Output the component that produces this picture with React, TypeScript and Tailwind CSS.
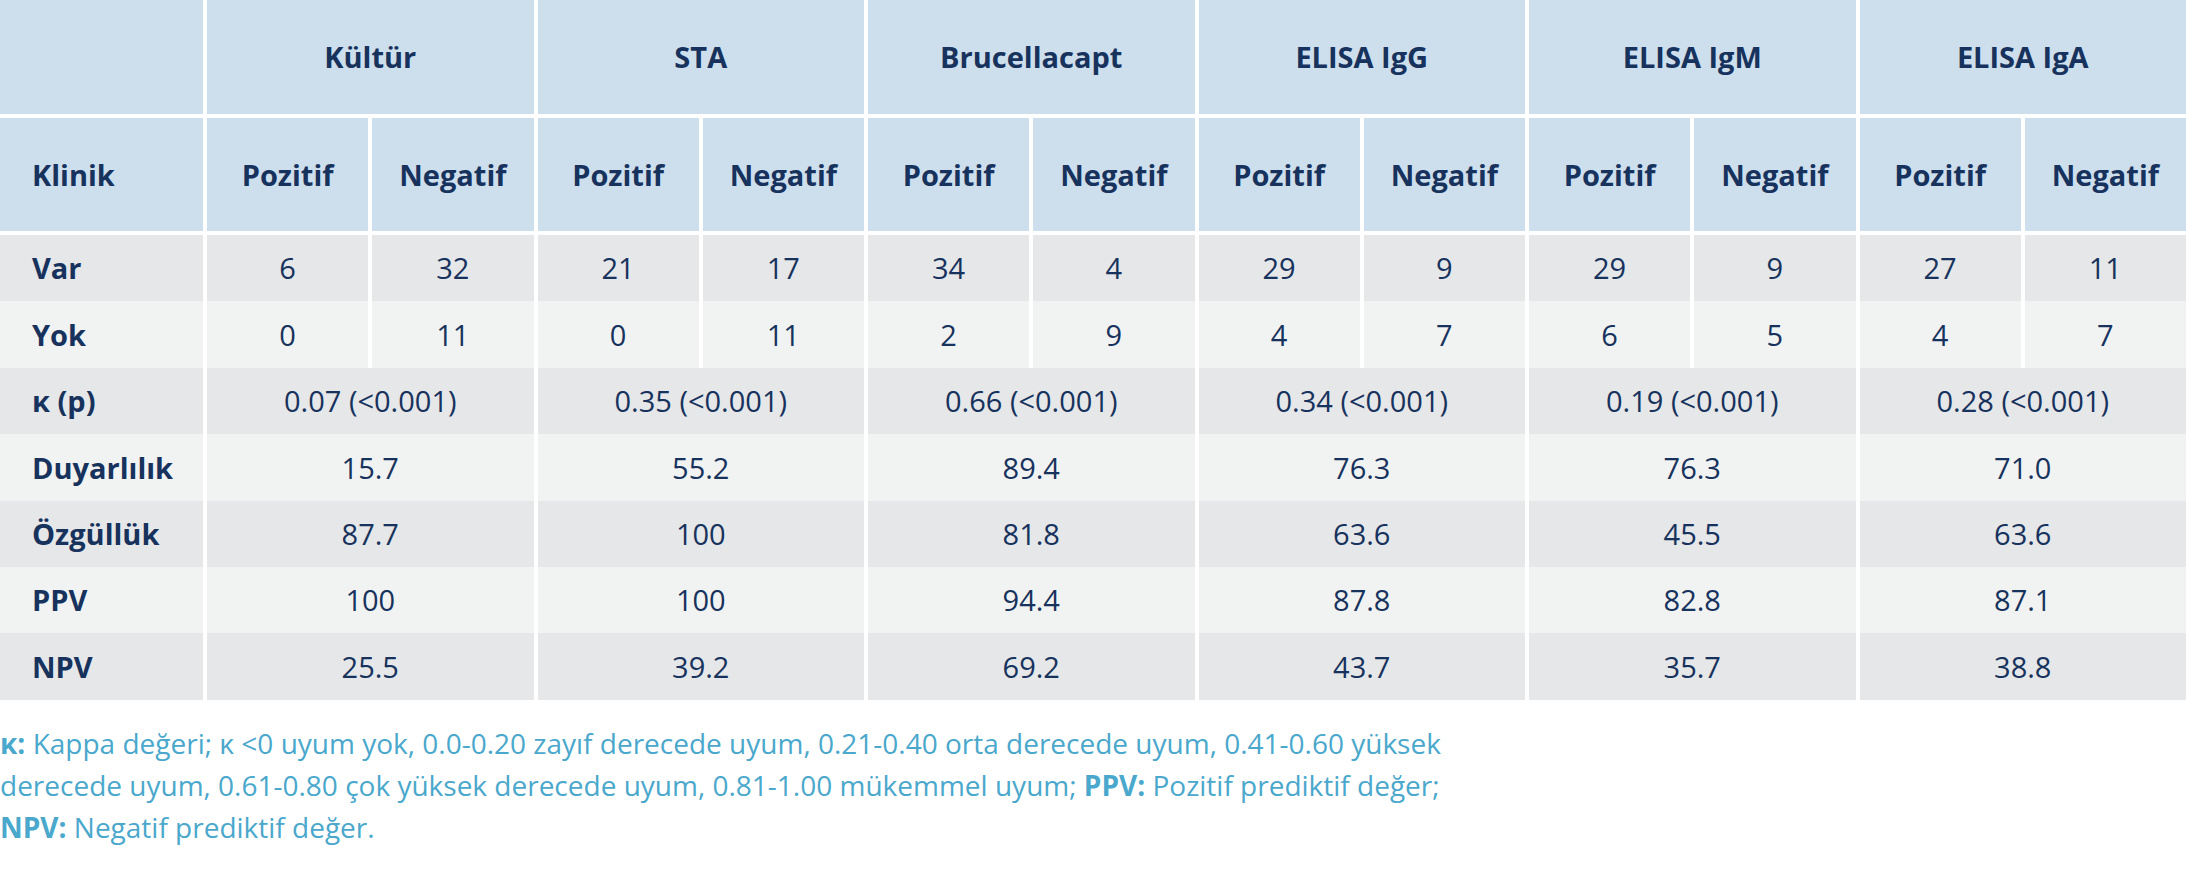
import React from 'react'

type Pair = [string, string]

const groups = ['Kültür', 'STA', 'Brucellacapt', 'ELISA IgG', 'ELISA IgM', 'ELISA IgA']

const counts: { label: string; values: Pair[]; tone: string }[] = [
  {
    label: 'Var',
    tone: 'bg-[#e5e7e9]',
    values: [
      ['6', '32'],
      ['21', '17'],
      ['34', '4'],
      ['29', '9'],
      ['29', '9'],
      ['27', '11'],
    ],
  },
  {
    label: 'Yok',
    tone: 'bg-[#f1f3f2]',
    values: [
      ['0', '11'],
      ['0', '11'],
      ['2', '9'],
      ['4', '7'],
      ['6', '5'],
      ['4', '7'],
    ],
  },
]

const stats: { label: string; values: string[]; tone: string }[] = [
  {
    label: 'κ (p)',
    tone: 'bg-[#e5e7e9]',
    values: ['0.07 (<0.001)', '0.35 (<0.001)', '0.66 (<0.001)', '0.34 (<0.001)', '0.19 (<0.001)', '0.28 (<0.001)'],
  },
  { label: 'Duyarlılık', tone: 'bg-[#f1f3f2]', values: ['15.7', '55.2', '89.4', '76.3', '76.3', '71.0'] },
  { label: 'Özgüllük', tone: 'bg-[#e5e7e9]', values: ['87.7', '100', '81.8', '63.6', '45.5', '63.6'] },
  { label: 'PPV', tone: 'bg-[#f1f3f2]', values: ['100', '100', '94.4', '87.8', '82.8', '87.1'] },
  { label: 'NPV', tone: 'bg-[#e5e7e9]', values: ['25.5', '39.2', '69.2', '43.7', '35.7', '38.8'] },
]

const head = 'bg-[#cddfed] border-b-4 border-white font-bold text-center'
const split = 'border-l-4 border-white'

export default function App() {
  return (
    <div className="w-[2186px] bg-white font-['Open_Sans',sans-serif] text-[29px] text-[#17325c]">
      <table className="w-full table-fixed border-separate border-spacing-0">
        <colgroup>
          <col className="w-[203px]" />
          {Array.from({ length: 12 }).map((_, i) => (
            <col key={i} />
          ))}
        </colgroup>
        <thead>
          <tr className="h-[118px]">
            <th className={head} />
            {groups.map((g) => (
              <th key={g} colSpan={2} className={`${head} ${split}`}>
                {g}
              </th>
            ))}
          </tr>
          <tr className="h-[117px]">
            <th className={`${head} pl-8 text-left`}>Klinik</th>
            {groups.map((g) => (
              <React.Fragment key={g}>
                <th className={`${head} ${split}`}>Pozitif</th>
                <th className={`${head} ${split}`}>Negatif</th>
              </React.Fragment>
            ))}
          </tr>
        </thead>
        <tbody>
          {counts.map((row) => (
            <tr key={row.label} className={`h-[66.4px] ${row.tone}`}>
              <td className="pl-8 font-bold">{row.label}</td>
              {row.values.map(([pos, neg], i) => (
                <React.Fragment key={i}>
                  <td className={`${split} text-center`}>{pos}</td>
                  <td className={`${split} text-center`}>{neg}</td>
                </React.Fragment>
              ))}
            </tr>
          ))}
          {stats.map((row) => (
            <tr key={row.label} className={`h-[66.4px] ${row.tone}`}>
              <td className="pl-8 font-bold">{row.label}</td>
              {row.values.map((v, i) => (
                <td key={i} colSpan={2} className={`${split} text-center`}>
                  {v}
                </td>
              ))}
            </tr>
          ))}
        </tbody>
      </table>

      <p className="mt-[22px] whitespace-nowrap text-[28px] leading-[42px] text-[#4aa8cc]">
        <b>κ:</b> Kappa değeri; κ &lt;0 uyum yok, 0.0-0.20 zayıf derecede uyum, 0.21-0.40 orta derecede uyum, 0.41-0.60 yüksek
        <br />
        derecede uyum, 0.61-0.80 çok yüksek derecede uyum, 0.81-1.00 mükemmel uyum; <b>PPV:</b> Pozitif prediktif değer;
        <br />
        <b>NPV:</b> Negatif prediktif değer.
      </p>
    </div>
  )
}
